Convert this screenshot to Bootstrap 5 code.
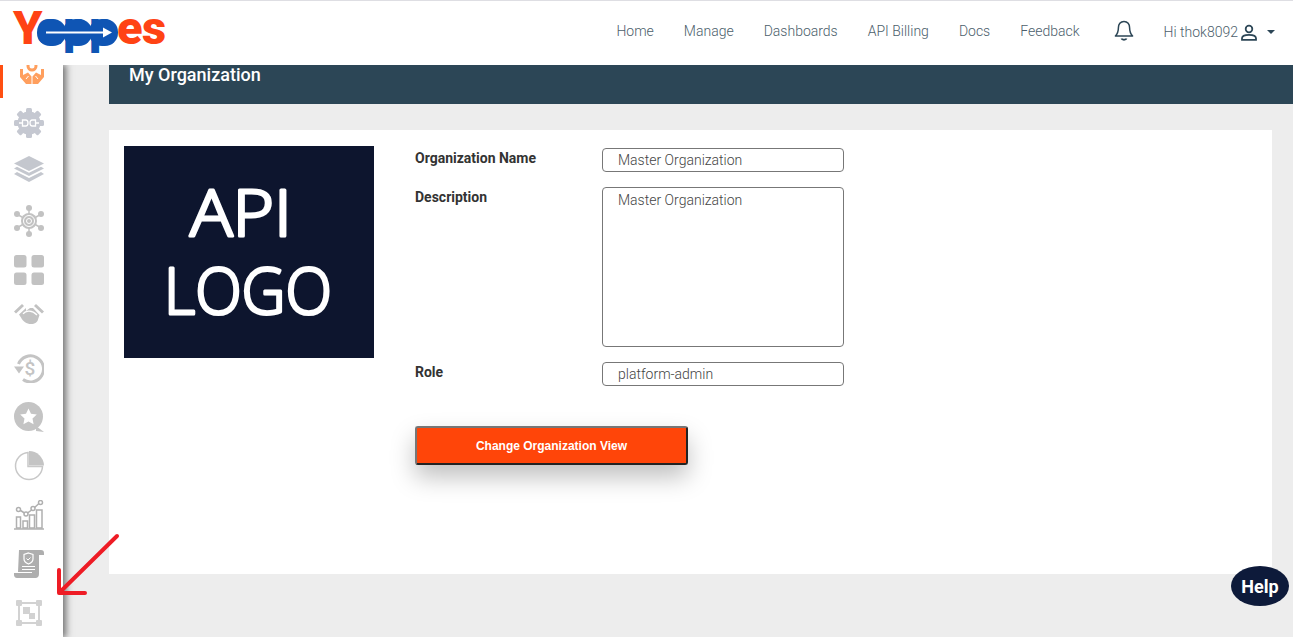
<!DOCTYPE html>
<html lang="en">
<head>
<meta charset="utf-8"/>
<title>My Organization - Yappes</title>
<link href="https://cdn.jsdelivr.net/npm/bootstrap@5.3.0/dist/css/bootstrap.min.css" rel="stylesheet"/>
<style>
  html, body { height: 100%; }
  body { background: #ededed; font-family: Roboto, "Liberation Sans", sans-serif; overflow: hidden; }
  .page-wrap { height: 637px; overflow: hidden; position: relative; }
  .top-bar { height: 65px; background: #fff; border-top: 1px solid #dedee3; padding: 0 18px 0 14px; position: relative; z-index: 5; }
  .brand-svg { display: block; width: 152px; height: 64px; overflow: visible; }
  .top-links { padding-bottom: 2px; }
  .top-links .nav { margin-bottom: 2px; }
  .top-bar .nav-link { color: #4c5e6b; font-weight: 300; font-size: 14px; padding: 0 15px; }
  .bell-link { margin: 0 30px 2px 19px; line-height: 0; }
  .user-name { color: #4c5e6b; font-weight: 300; font-size: 14px; margin-right: 2px; }
  .user-caret { width: 0; height: 0; border-left: 4px solid transparent; border-right: 4px solid transparent; border-top: 4px solid #2c4656; margin-left: 9px; }
  .side-rail { width: 63px; height: 572px; flex: none; background: #fff; box-shadow: 2px 0 7px 1px #6f6f6f; position: relative; z-index: 2; }
  .rail-item { height: 49px; display: flex; align-items: center; justify-content: center; flex: none; padding-right: 5px; }
  .rail-item svg { display: block; }
  .rail-up { padding-bottom: 6px; }
  .rail-active { height: 33px; align-items: flex-end; overflow: hidden; border-left: 3px solid #ff4f12; padding-right: 3px; padding-bottom: 14px; }
  .main-area { flex: 1; padding-left: 46px; min-width: 0; }
  .org-banner { height: 39px; background: #2c4656; color: #fff; font-size: 18px; font-weight: 500; padding-left: 20px; line-height: 20px; }
  .org-panel { background: #fff; height: 444px; margin: 26px 21px 0 0; padding: 16px 15px; }
  .api-logo { width: 250px; height: 212px; background: #0d152e; flex: none; margin-right: 41px; }
  .api-logo svg { display: block; }
  .org-form { padding-top: 2px; }
  .org-row { margin-bottom: 15px; }
  .org-label { width: 187px; flex: none; font-size: 14px; font-weight: 700; color: #333; line-height: 21px; }
  .org-input.form-control { width: 242px; height: 24px; min-height: 0; padding: 0 15px; border: 1px solid #777; border-radius: 4px; font-size: 14px; font-weight: 300; color: #444; line-height: 22px; box-shadow: none; }
  textarea.org-input.form-control { height: 160px; padding-top: 1px; resize: none; }
  .org-btn.btn { width: 273px; height: 39px; margin-top: 25px; padding: 0; background: #ff4509; color: #fff; font-family: "Liberation Sans", Arial, sans-serif; font-size: 12px; font-weight: 700; border: 2px solid; border-color: #767676 #222 #222 #767676; border-radius: 3px; box-shadow: 0 12px 24px rgba(0,0,0,.25); }
  .help-pill { position: absolute; left: 1231px; top: 566px; width: 58px; height: 40px; border-radius: 50%; background: #0d1a3a; color: #fff; font-size: 18px; font-weight: 700; z-index: 6; }
  .red-arrow { position: absolute; left: 50px; top: 528px; z-index: 6; }
</style>
</head>
<body>
<div class="page-wrap">
  <nav class="top-bar d-flex justify-content-between">
    <a href="#" class="d-block">
      <svg class="brand-svg" viewBox="14 0 152 64" xmlns="http://www.w3.org/2000/svg">
        <g fill="#0f55b4">
          <rect x="37" y="18" width="29" height="27" rx="13"/>
          <rect x="63" y="18" width="29" height="27" rx="13"/>
          <rect x="89" y="18" width="29" height="27" rx="13"/>
        </g>
        <text y="43" font-family="Roboto, sans-serif" font-weight="900" font-size="47"><tspan x="13" fill="#ff4314">Y</tspan><tspan x="37 63 89" fill="#0f55b4">app</tspan><tspan x="117 142" fill="#ff4314">es</tspan></text>
        <path d="M46 31.500h58" stroke="#fff" stroke-width="2" fill="none"/>
        <path d="M103 26.500l9 5-9 5z" fill="#fff"/>
      </svg>
    </a>
    <div class="top-links d-flex align-items-center">
      <ul class="nav">
        <li class="nav-item"><a class="nav-link" href="#">Home</a></li>
        <li class="nav-item"><a class="nav-link" href="#">Manage</a></li>
        <li class="nav-item"><a class="nav-link" href="#">Dashboards</a></li>
        <li class="nav-item"><a class="nav-link" href="#">API Billing</a></li>
        <li class="nav-item"><a class="nav-link" href="#">Docs</a></li>
        <li class="nav-item"><a class="nav-link" href="#">Feedback</a></li>
      </ul>
      <a href="#" class="bell-link">
        <svg width="20" height="22" viewBox="0 0 20 22" fill="none" stroke="#2c4656" stroke-width="1.500" stroke-linejoin="round" xmlns="http://www.w3.org/2000/svg"><path d="M10 1.500c-3.600 0-5.600 2.800-5.600 6.200 0 4-.8 6-3 8.300h17.200c-2.200-2.300-3-4.300-3-8.300 0-3.400-2-6.200-5.600-6.200z"/><path d="M7.500 18.500c.6 1.500 4.400 1.500 5 0" stroke-width="2"/></svg>
      </a>
      <span class="user-name">Hi thok8092</span>
      <svg width="18" height="17" viewBox="0 0 18 17" fill="none" stroke="#2c4656" stroke-width="1.800" xmlns="http://www.w3.org/2000/svg"><circle cx="9" cy="5" r="3.300"/><path d="M2 15.800v-1.500c0-2.300 3.500-3.400 7-3.400s7 1.100 7 3.400v1.500z"/></svg>
      <span class="user-caret"></span>
    </div>
  </nav>

  <div class="d-flex">
    <aside class="side-rail d-flex flex-column">
      <div class="rail-item rail-active">
        <svg width="26" height="22" viewBox="0 0 26 22" xmlns="http://www.w3.org/2000/svg"><circle cx="13" cy="4" r="4" fill="none" stroke="#ff9f5e" stroke-width="3"/><path d="M1 7h3v6l5-2.500 3.500 4V22H7L1 15zM25 7h-3v6l-5-2.500-3.500 4V22H19l6-7z" fill="#ff9f5e"/><path d="M7 17l2.500-3M19 17l-2.500-3" stroke="#fff" stroke-width="1" fill="none"/></svg>
      </div>
      <div class="rail-item">
        <svg width="30" height="30" viewBox="0 0 30 30" xmlns="http://www.w3.org/2000/svg"><g fill="#c5c8d1"><circle cx="15" cy="15" r="11.500"/><rect x="12" y="0" width="6" height="6" rx="1.500"/><rect x="12" y="24" width="6" height="6" rx="1.500"/><rect x="0" y="12" width="6" height="6" rx="1.500"/><rect x="24" y="12" width="6" height="6" rx="1.500"/><rect x="12" y="0" width="6" height="6" rx="1.500" transform="rotate(45 15 15)"/><rect x="12" y="24" width="6" height="6" rx="1.500" transform="rotate(45 15 15)"/><rect x="0" y="12" width="6" height="6" rx="1.500" transform="rotate(45 15 15)"/><rect x="24" y="12" width="6" height="6" rx="1.500" transform="rotate(45 15 15)"/></g><path d="M5 15h3.500M25 15h-3.500M8.500 12h3.200c1.600 0 2.300 1.400 2.300 3s-.7 3-2.300 3H8.500zM21.500 12h-3.200c-1.600 0-2.300 1.400-2.300 3s.7 3 2.300 3h3.200z" fill="none" stroke="#fff" stroke-width="1.300"/></svg>
      </div>
      <div class="rail-item rail-up">
        <svg width="30" height="26" viewBox="0 0 30 26" fill="#c4c7ce" xmlns="http://www.w3.org/2000/svg"><path d="M15 0 30 7.500 15 15 0 7.500z"/><path d="M3 10.800 15 16.800 27 10.800 30 12.500 15 20 0 12.500z"/><path d="M3 16 15 22 27 16 30 18 15 26 0 18z"/></svg>
      </div>
      <div class="rail-item">
        <svg width="30" height="32" viewBox="0 0 30 32" fill="#c2c2c2" xmlns="http://www.w3.org/2000/svg"><g stroke="#c2c2c2" stroke-width="1.500"><path d="M15 3v26M3.500 9.500l23 13M26.500 9.500l-23 13"/></g><circle cx="15" cy="3" r="3"/><circle cx="15" cy="29" r="3"/><circle cx="3" cy="9" r="3"/><circle cx="27" cy="9" r="3"/><circle cx="3" cy="23" r="3"/><circle cx="27" cy="23" r="3"/><circle cx="15" cy="16" r="8"/><circle cx="15" cy="16" r="5.500" fill="none" stroke="#fff" stroke-width="1"/><circle cx="15" cy="16" r="2.500" fill="none" stroke="#fff" stroke-width="1"/></svg>
      </div>
      <div class="rail-item">
        <svg width="30" height="30" viewBox="0 0 30 30" fill="#c2c2c2" xmlns="http://www.w3.org/2000/svg"><rect width="12.500" height="12.500" rx="2.500"/><rect x="17.500" width="12.500" height="12.500" rx="2.500"/><rect y="17.500" width="12.500" height="12.500" rx="2.500"/><rect x="17.500" y="17.500" width="12.500" height="12.500" rx="2.500"/></svg>
      </div>
      <div class="rail-item rail-up">
        <svg width="30" height="23" viewBox="0 0 30 23" fill="#c2c2c2" xmlns="http://www.w3.org/2000/svg"><path d="M8 0 10 2 2 9.500 0 7.500zM22 0 30 7.500 28 9.500 20 2z"/><path d="M12 4 5 10.500l2 3c2 4 5.500 6.500 10 6.500 4 0 6.500-2 7-4.500l1.500-4.500L19 4h-3l-4 3z"/><path d="M9 10c3-4 9-4 14 1" fill="none" stroke="#fff" stroke-width="1.200"/></svg>
      </div>
      <div class="rail-item">
        <svg width="30" height="30" viewBox="0 0 30 30" xmlns="http://www.w3.org/2000/svg"><path d="M4.500 11A13 13 0 1 1 9 26.500" fill="none" stroke="#c4c4c4" stroke-width="3"/><path d="M0 13.500h10l-5 7z" fill="#c4c4c4"/><text x="16" y="21.500" text-anchor="middle" font-family="Roboto, sans-serif" font-size="19" font-weight="500" fill="#c4c4c4">$</text></svg>
      </div>
      <div class="rail-item">
        <svg width="30" height="30" viewBox="0 0 30 30" xmlns="http://www.w3.org/2000/svg"><circle cx="14.500" cy="14.500" r="14.500" fill="#c4c4c4"/><path d="M22 24 30 30 22 29z" fill="#c4c4c4"/><path d="M14.500 6.500l2.500 5.300 5.800.7-4.300 4 1.100 5.700-5.100-2.800-5.100 2.800 1.100-5.700-4.300-4 5.800-.7z" fill="#fff"/></svg>
      </div>
      <div class="rail-item">
        <svg width="30" height="30" viewBox="0 0 30 30" xmlns="http://www.w3.org/2000/svg"><path d="M14 1.500A13.500 13.500 0 1 0 28.500 15.500H14z" fill="none" stroke="#c8c8c8" stroke-width="1.500"/><path d="M15 0A15 15 0 0 1 30 14.500H15z" fill="#c4c4c4"/></svg>
      </div>
      <div class="rail-item">
        <svg width="30" height="30" viewBox="0 0 30 30" xmlns="http://www.w3.org/2000/svg"><g fill="none" stroke="#b0b0b0" stroke-width="1.500"><path d="M0 29h30"/><path d="M2.500 28V17h4v11zM9 28v-7h4.500v7zM15.500 28V15h5v13zM22.500 28V10h5.500v18z"/><path d="M5 9.500l7 4.500 7-5 7-6.500"/></g><g fill="#fff" stroke="#b0b0b0" stroke-width="1.500"><circle cx="4.500" cy="9.500" r="2"/><circle cx="12" cy="14" r="2"/><circle cx="19" cy="8.500" r="2"/><circle cx="26.500" cy="2.500" r="2"/></g></svg>
      </div>
      <div class="rail-item">
        <svg width="30" height="28" viewBox="0 0 30 28" xmlns="http://www.w3.org/2000/svg"><path d="M5 0h22c2 0 3 1.300 3 3v2h-5v19c0 2.500-1.500 4-3.500 4H3c-2 0-3-1.500-3-3v-2h18v-1H4z" fill="#aeaeae"/><path d="M14.500 3l4.500 1.500V9c0 2.500-2 4-4.500 5C12 13 10 11.500 10 9V4.500z" fill="none" stroke="#fff" stroke-width="1.200"/><path d="M12.500 8.500l1.500 1.500 2.500-2.500M8 16.500h13M8 19.500h13" fill="none" stroke="#fff" stroke-width="1"/></svg>
      </div>
      <div class="rail-item">
        <svg width="26" height="26" viewBox="0 0 26 26" xmlns="http://www.w3.org/2000/svg"><rect x="3" y="3" width="20" height="20" fill="none" stroke="#d2d2d2" stroke-width="2"/><g fill="#d2d2d2"><rect width="6" height="6" rx="1"/><rect x="20" width="6" height="6" rx="1"/><rect y="20" width="6" height="6" rx="1"/><rect x="20" y="20" width="6" height="6" rx="1"/><rect x="7" y="7" width="7" height="7"/><rect x="13" y="13" width="6" height="6"/></g></svg>
      </div>
    </aside>

    <main class="main-area">
      <div class="org-banner">My Organization</div>
      <section class="org-panel d-flex">
        <div class="api-logo">
          <svg width="250" height="212" viewBox="0 0 250 212" xmlns="http://www.w3.org/2000/svg">
            <g fill="#fff" stroke="#fff" stroke-width="3" stroke-linejoin="round" font-family="'Open Sans', sans-serif" font-weight="300" font-size="64">
              <text x="66" y="90" textLength="102" lengthAdjust="spacingAndGlyphs">API</text>
              <text x="40" y="168" textLength="168" lengthAdjust="spacingAndGlyphs">LOGO</text>
            </g>
          </svg>
        </div>
        <form class="org-form d-flex flex-column align-items-start">
          <div class="org-row d-flex">
            <label class="org-label" for="org-name">Organization Name</label>
            <input class="org-input form-control" id="org-name" type="text" value="Master Organization"/>
          </div>
          <div class="org-row d-flex">
            <label class="org-label" for="org-desc">Description</label>
            <textarea class="org-input form-control" id="org-desc">Master Organization</textarea>
          </div>
          <div class="org-row d-flex">
            <label class="org-label" for="org-role">Role</label>
            <input class="org-input form-control" id="org-role" type="text" value="platform-admin"/>
          </div>
          <button class="org-btn btn" type="button">Change Organization View</button>
        </form>
      </section>
    </main>
  </div>

  <div class="help-pill d-flex align-items-center justify-content-center">Help</div>
  <svg class="red-arrow" width="76" height="72" viewBox="0 0 76 72" xmlns="http://www.w3.org/2000/svg"><path d="M67 8 10 64M9 42v23h26" fill="none" stroke="#ee1c25" stroke-width="4" stroke-linecap="round" stroke-linejoin="round"/></svg>
</div>
<script src="https://cdn.jsdelivr.net/npm/bootstrap@5.3.0/dist/js/bootstrap.bundle.min.js"></script>
</body>
</html>
